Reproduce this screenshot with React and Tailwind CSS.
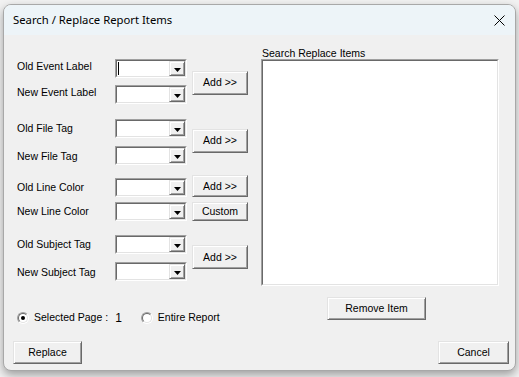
import React from 'react';

const body = { fontFamily: '"Liberation Sans", Arial, sans-serif' };

const Arrow = () => (
  <svg width="7" height="4" viewBox="0 0 7 4" className="block mt-[2px]">
    <path d="M0 0H7L3.5 4Z" fill="#000" />
  </svg>
);

const Combo = ({ cursor }) => (
  <div className="w-[72px] h-[19px] border border-t-[#a0a0a0] border-l-[#a0a0a0] border-r-white border-b-white shrink-0">
    <div className="h-full flex bg-white border border-t-[#696969] border-l-[#696969] border-r-[#e3e3e3] border-b-[#e3e3e3]">
      <div className="flex-1 flex items-center">
        {cursor && <div className="w-px h-[13px] bg-black ml-[1px]" />}
      </div>
      <div className="w-[16px] h-full flex items-center justify-center bg-[#f0f0f0] border border-t-[#e3e3e3] border-l-[#e3e3e3] border-r-[#696969] border-b-[#696969] shadow-[inset_1px_1px_0_#fff,inset_-1px_-1px_0_#a0a0a0]">
        <Arrow />
      </div>
    </div>
  </div>
);

const Btn = ({ children, className = '' }) => (
  <button
    className={`flex items-center justify-center bg-[#f0f0f0] text-black text-[10.5px] leading-none border border-t-[#e3e3e3] border-l-[#e3e3e3] border-r-[#696969] border-b-[#696969] shadow-[inset_1px_1px_0_#fff,inset_-1px_-1px_0_#a0a0a0] ${className}`}
  >
    {children}
  </button>
);

const Row = ({ label, cursor, labelClass = '' }) => (
  <div className="flex items-center h-[19px]">
    <span className={`w-[98px] shrink-0 ${labelClass}`}>{label}</span>
    <Combo cursor={cursor} />
  </div>
);

const Radio = ({ checked }) => (
  <div className="w-[12px] h-[12px] rounded-full border border-t-[#a0a0a0] border-l-[#a0a0a0] border-r-white border-b-white shrink-0">
    <div className="w-full h-full rounded-full bg-white flex items-center justify-center border border-t-[#696969] border-l-[#696969] border-r-[#e3e3e3] border-b-[#e3e3e3]">
      {checked && <div className="w-[4px] h-[4px] rounded-full bg-black" />}
    </div>
  </div>
);

export default function App() {
  return (
    <div className="min-h-screen bg-[#f2f2f2] pt-[4px] pl-[3px]">
      <div className="w-[513px] h-[367px] border border-[#a8a8a8] rounded-[8px] overflow-hidden bg-[#f0f0f0] shadow-[0_4px_10px_rgba(0,0,0,0.35)] flex flex-col">
        {/* title bar */}
        <div className="h-[30px] shrink-0 bg-[#edf4f8] flex items-center justify-between pl-[9px] pr-[9px]">
          <span className="text-[11.3px] text-black" style={{ fontFamily: '"Noto Sans", "Open Sans", sans-serif' }}>
            Search / Replace Report Items
          </span>
          <svg width="11" height="11" viewBox="0 0 11 11" className="mr-[1px]">
            <path d="M0.5 0.5L10.5 10.5M10.5 0.5L0.5 10.5" stroke="#000" strokeWidth="1" />
          </svg>
        </div>

        {/* body */}
        <div className="flex-1 flex flex-col text-[10.5px] text-black" style={body}>
          <div className="flex h-[289px]">
            {/* left column */}
            <div className="w-[245px] pl-[13px] pt-[24px] flex flex-col">
              <div className="flex items-center">
                <div className="flex flex-col gap-[7px]">
                  <Row label="Old Event Label" cursor labelClass="mb-[4px]" />
                  <Row label="New Event Label" labelClass="mb-[4px]" />
                </div>
                <Btn className="w-[56px] h-[24px] ml-[5px] mt-[2px]">Add &gt;&gt;</Btn>
              </div>

              <div className="flex items-center mt-[15px]">
                <div className="flex flex-col gap-[8px]">
                  <Row label="Old File Tag" />
                  <Row label="New File Tag" labelClass="mt-[2px]" />
                </div>
                <Btn className="w-[56px] h-[24px] ml-[5px] mb-[3px]">Add &gt;&gt;</Btn>
              </div>

              <div className="flex flex-col gap-[5px] mt-[10px]">
                <div className="flex items-end h-[22px]">
                  <Row label="Old Line Color" />
                  <Btn className="w-[56px] h-[22px] ml-[5px]">Add &gt;&gt;</Btn>
                </div>
                <div className="flex items-center">
                  <Row label="New Line Color" />
                  <Btn className="w-[56px] h-[19px] ml-[5px]">Custom</Btn>
                </div>
              </div>

              <div className="flex items-center mt-[14px]">
                <div className="flex flex-col gap-[8px]">
                  <Row label="Old Subject Tag" />
                  <Row label="New Subject Tag" labelClass="mt-[2px]" />
                </div>
                <Btn className="w-[56px] h-[24px] ml-[5px] mb-[2px]">Add &gt;&gt;</Btn>
              </div>

              <div className="flex items-center h-[13px] mt-[30px]">
                <Radio checked />
                <span className="ml-[5px]">Selected Page :</span>
                <span className="ml-[7px] text-[12px]">1</span>
                <div className="ml-[19px]"><Radio /></div>
                <span className="ml-[5px]">Entire Report</span>
              </div>
            </div>

            {/* right column */}
            <div className="ml-[12px] pt-[13px] flex flex-col">
              <div className="h-[11px] leading-[11px] pl-[1px]">Search Replace Items</div>
              <div className="w-[238px] h-[227px] border border-t-[#a0a0a0] border-l-[#a0a0a0] border-r-white border-b-white">
                <div className="w-full h-full bg-white border border-t-[#696969] border-l-[#696969] border-r-[#e3e3e3] border-b-[#e3e3e3]" />
              </div>
              <Btn className="w-[99px] h-[23px] ml-[66px] mt-[11px]">Remove Item</Btn>
            </div>
          </div>

          <div className="flex justify-between pl-[9px] pr-[6px] mt-[17px]">
            <Btn className="w-[69px] h-[23px]">Replace</Btn>
            <Btn className="w-[71px] h-[23px]">Cancel</Btn>
          </div>
        </div>
      </div>
    </div>
  );
}
